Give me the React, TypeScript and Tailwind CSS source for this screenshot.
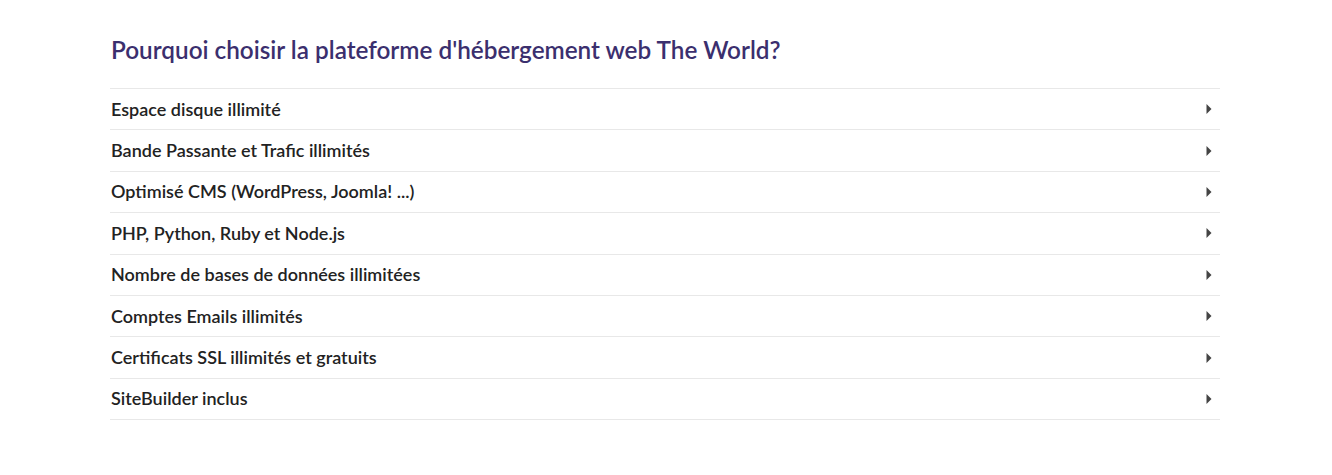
const features = [
  "Espace disque illimité",
  "Bande Passante et Trafic illimités",
  "Optimisé CMS (WordPress, Joomla! ...)",
  "PHP, Python, Ruby et Node.js",
  "Nombre de bases de données illimitées",
  "Comptes Emails illimités",
  "Certificats SSL illimités et gratuits",
  "SiteBuilder inclus",
];

function Caret() {
  return (
    <svg width="6" height="10" viewBox="0 0 6 10" className="text-[#444]">
      <path d="M0.5 0 L5.5 5 L0.5 10 Z" fill="currentColor" />
    </svg>
  );
}

export default function App() {
  return (
    <div className="min-h-[475px] bg-white font-['Lato','Liberation_Sans',sans-serif]">
      <div className="w-[1110px] ml-[110px] pt-[34px]">
        <h2 className="text-[24.3px] leading-[32px] font-semibold text-[#3b2f6e] pl-px">
          Pourquoi choisir la plateforme d'hébergement web The World?
        </h2>
        <div className="mt-[22px] border-b border-[#e8e8e8]">
          {features.map((f) => (
            <div
              key={f}
              className="h-[41.4px] border-t border-[#e8e8e8] flex items-center justify-between pl-px pr-[8px]"
            >
              <span className="text-[18px] font-semibold text-[#222]">{f}</span>
              <Caret />
            </div>
          ))}
        </div>
      </div>
    </div>
  );
}
